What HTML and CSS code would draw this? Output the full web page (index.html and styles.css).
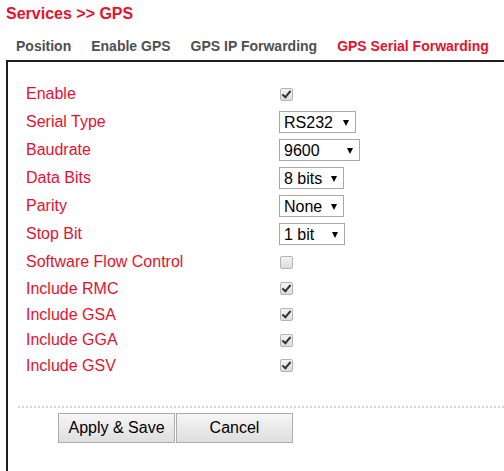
FILE: index.html
```html
<!DOCTYPE html>
<html lang="en">
<head>
  <meta charset="UTF-8" />
  <title>Services - GPS</title>
  <link rel="stylesheet" href="styles.css">
</head>
<body>

  <h1 class="page-title">Services &gt;&gt; GPS</h1>

  <!-- Sub menu -->
  <ul class="tabs">
    <li><a href="#">Position</a></li>
    <li><a href="#">Enable GPS</a></li>
    <li><a href="#">GPS IP Forwarding</a></li>
    <li class="current"><a href="#">GPS Serial Forwarding</a></li>
  </ul>

  <div class="panel">
    <form class="settings">
      <div class="row">
        <label>Enable</label>
        <input type="checkbox" checked />
      </div>
      <div class="row">
        <label>Serial Type</label>
        <span class="select sel-type">
          <select>
            <option>RS232</option>
            <option>RS485</option>
          </select>
        </span>
      </div>
      <div class="row">
        <label>Baudrate</label>
        <span class="select sel-baud">
          <select>
            <option>9600</option>
            <option>19200</option>
            <option>38400</option>
            <option>57600</option>
            <option>115200</option>
          </select>
        </span>
      </div>
      <div class="row">
        <label>Data Bits</label>
        <span class="select sel-short">
          <select>
            <option>8 bits</option>
            <option>7 bits</option>
          </select>
        </span>
      </div>
      <div class="row">
        <label>Parity</label>
        <span class="select sel-short">
          <select>
            <option>None</option>
            <option>Odd</option>
            <option>Even</option>
          </select>
        </span>
      </div>
      <div class="row">
        <label>Stop Bit</label>
        <span class="select sel-stop">
          <select>
            <option>1 bit</option>
            <option>2 bits</option>
          </select>
        </span>
      </div>
      <div class="row">
        <label>Software Flow Control</label>
        <input type="checkbox" />
      </div>
      <div class="row short">
        <label>Include RMC</label>
        <input type="checkbox" checked />
      </div>
      <div class="row short">
        <label>Include GSA</label>
        <input type="checkbox" checked />
      </div>
      <div class="row short">
        <label>Include GGA</label>
        <input type="checkbox" checked />
      </div>
      <div class="row short">
        <label>Include GSV</label>
        <input type="checkbox" checked />
      </div>

      <div class="actions">
        <button type="submit">Apply &amp; Save</button>
        <button type="reset">Cancel</button>
      </div>
    </form>
  </div>

</body>
</html>
```

FILE: styles.css
```css
:root {
  --red: #e8112d;
  --tab: #4f4f4f;
  --line: #1e1e1e;
}

* {
  margin: 0;
  padding: 0;
  box-sizing: border-box;
}

body {
  font-family: "Liberation Sans", Arial, sans-serif;
  background: #ffffff;
  padding: 5px 0 0 6px;
  overflow: hidden;
}

.page-title {
  font-size: 16px;
  font-weight: bold;
  line-height: 18px;
  color: var(--red);
}

/* sub menu */
.tabs {
  list-style: none;
  display: flex;
  margin-top: 15px;
}

.tabs a {
  display: block;
  padding: 0 10px;
  font-size: 14px;
  font-weight: bold;
  line-height: 16px;
  color: var(--tab);
  text-decoration: none;
}

.tabs .current a {
  color: var(--red);
}

.panel {
  margin-top: 6px;
  border-top: 2px solid var(--line);
  border-left: 2px solid var(--line);
  padding: 18px 0 40px 0;
}

.row {
  display: flex;
  align-items: center;
  height: 28px;
  padding-left: 18px;
}

.row.short {
  height: 25.7px;
}

.row label {
  width: 253px;
  font-size: 16px;
  color: var(--red);
}

/* checkboxes */
.row input[type="checkbox"] {
  appearance: none;
  -webkit-appearance: none;
  position: relative;
  width: 13px;
  height: 13px;
  margin: 0 0 0 1px;
  border: 1px solid #b4b4b4;
  border-radius: 2px;
  background: linear-gradient(#f4f4f4, #dcdcdc);
}

.row input[type="checkbox"]:checked::after {
  content: "";
  position: absolute;
  left: 3px;
  top: 0px;
  width: 3px;
  height: 7px;
  border: solid #333;
  border-width: 0 2px 2px 0;
  transform: rotate(40deg);
}

/* selects */
.select {
  position: relative;
  display: inline-block;
  height: 22px;
}

.select select {
  appearance: none;
  -webkit-appearance: none;
  width: 100%;
  height: 22px;
  padding: 0 0 0 4px;
  border: 1px solid #a9a9a9;
  background: #fff;
  font-family: "Liberation Sans", Arial, sans-serif;
  font-size: 16px;
  color: #000;
}

.select::after {
  content: "";
  position: absolute;
  right: 7px;
  top: 9px;
  border-left: 3.5px solid transparent;
  border-right: 3.5px solid transparent;
  border-top: 6px solid #000;
  pointer-events: none;
}

.sel-type { width: 77px; }
.sel-baud { width: 81px; }
.sel-short { width: 65px; }
.sel-stop { width: 66px; }

/* buttons */
.actions {
  margin: 27px 0 0 10px;
  padding: 5px 0 0 40px;
  border-top: 2px dotted #d6d6d6;
  display: flex;
}

.actions button {
  width: 117px;
  height: 30px;
  border: 1px solid #adadad;
  background: linear-gradient(#f6f6f6, #dedede);
  font-family: "Liberation Sans", Arial, sans-serif;
  font-size: 16px;
  color: #000;
}

.actions button + button {
  margin-left: 1px;
}
```
